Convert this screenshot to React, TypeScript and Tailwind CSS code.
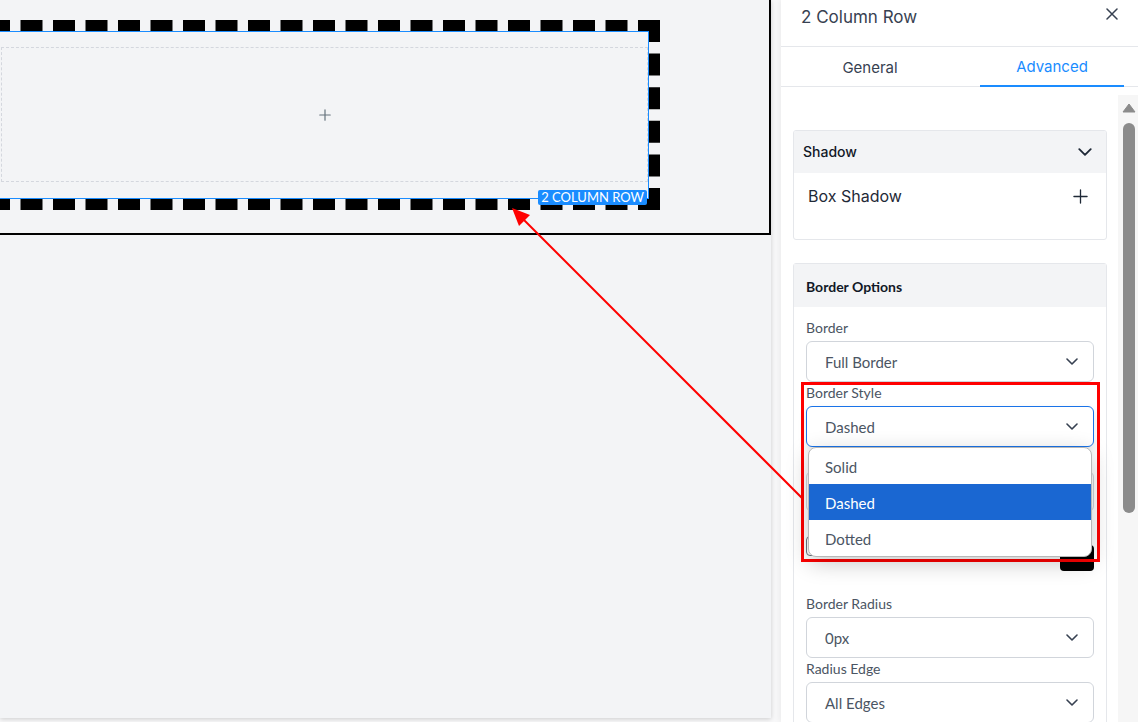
import React from 'react';

const ChevronDown = ({ className = '' }: { className?: string }) => (
  <svg viewBox="0 0 12 7" className={className} fill="none" stroke="currentColor" strokeWidth={1.6} strokeLinecap="round" strokeLinejoin="round">
    <path d="M1 1l5 5 5-5" />
  </svg>
);

const PlusIcon = ({ className = '', width = 1.5 }: { className?: string; width?: number }) => (
  <svg viewBox="0 0 16 16" className={className} fill="none" stroke="currentColor" strokeWidth={width} strokeLinecap="round">
    <path d="M8 1v14M1 8h14" />
  </svg>
);

const SelectBox = ({ value, focused = false }: { value?: string; focused?: boolean }) => (
  <div
    className={`h-[41px] flex items-center justify-between rounded-[6px] bg-white pl-[18px] pr-[15px] text-[15px] text-[#4b5563] ${
      focused ? 'border-[1.5px] border-[#1a73e8] shadow-[0_4px_8px_rgba(0,0,0,0.10)]' : 'border border-[#d1d5db]'
    }`}
  >
    <span className="pt-[2px]">{value}</span>
    <ChevronDown className="w-[12px] h-[7px] text-[#374151]" />
  </div>
);

// label is optional: fields covered by the open menu keep their space but show no text
const Field = ({ label, children, className = '' }: { label?: string; children: React.ReactNode; className?: string }) => (
  <div className={`relative ${className}`}>
    <div className="h-[18px] text-[14px] leading-[18px] text-[#4b5563] mb-[4px]">{label}</div>
    {children}
  </div>
);

const options = ['Solid', 'Dashed', 'Dotted'];

export default function App() {
  return (
    <div className="relative w-[1138px] h-[722px] overflow-hidden bg-[#f8f8f9] flex font-['Lato',sans-serif]">
      {/* canvas */}
      <div className="w-[771px] h-[718px] shrink-0 bg-[#f3f4f6] overflow-hidden shadow-[0_1px_5px_rgba(0,0,0,0.18)]">
        <div className="h-[235px] border-r-2 border-b-2 border-black pt-[20px]">
          <div className="ml-[-12px] w-[672px] h-[190px] border-[11px] border-dashed border-black">
            <div className="relative h-full border border-[#1a8cff] pl-[1px] pt-[15px] pb-[16px]">
              <div className="h-full border border-dashed border-[#d4d7de] flex items-center justify-center">
                <PlusIcon className="w-[12px] h-[12px] text-[#66737d]" width={1.6} />
              </div>
              <div className="absolute right-[1px] bottom-[-7px] bg-[#1a8cff] text-white text-[13px] leading-[15px] px-[3px] rounded-[2px] whitespace-nowrap">
                2 COLUMN ROW
              </div>
            </div>
          </div>
        </div>
      </div>

      {/* settings panel */}
      <aside className="ml-[10px] w-[357px] h-[722px] bg-white flex flex-col shadow-[-2px_0_6px_rgba(0,0,0,0.05)] font-['Inter',sans-serif]">
        <div className="h-[47px] shrink-0 border-b border-[#e5e7eb] flex items-start justify-between pl-[20px] pr-[20px] pt-[5px]">
          <span className="text-[17px] leading-[24px] text-[#374151]">2 Column Row</span>
          <svg viewBox="0 0 12 12" className="w-[12px] h-[12px] mt-[3px] text-[#374151]" fill="none" stroke="currentColor" strokeWidth={1.5} strokeLinecap="round">
            <path d="M1 1l10 10M11 1L1 11" />
          </svg>
        </div>

        <div className="h-[40px] shrink-0 border-b border-[#e5e7eb] flex text-[15px]">
          <div className="w-[178px] flex items-center justify-center pt-[3px] text-[#374151]">General</div>
          <div className="ml-[21px] w-[144px] flex items-center justify-center pt-[3px] text-[#1a8cff] border-b-2 border-[#1a8cff] mb-[-1px]">
            Advanced
          </div>
        </div>

        <div className="flex-1 flex min-h-0">
          <div className="w-[337px] pt-[43px] pl-[12px]">
            {/* Shadow */}
            <div className="w-[314px] border border-[#e5e7eb] rounded-[3px] overflow-hidden">
              <div className="h-[42px] bg-[#f3f4f6] flex items-center justify-between pl-[9px] pr-[14px] pb-[1px]">
                <span className="text-[14px] font-medium text-[#111827]">Shadow</span>
                <ChevronDown className="w-[14px] h-[8px] text-[#1f2937]" />
              </div>
              <div className="h-[66px] flex items-start justify-between pl-[14px] pr-[18px] pt-[12px]">
                <span className="text-[16px] leading-[22px] text-[#1f2937]">Box Shadow</span>
                <PlusIcon className="w-[15px] h-[15px] mt-[4px] text-[#1f2937]" width={1.4} />
              </div>
            </div>

            {/* Border Options */}
            <div className="mt-[23px] w-[314px] h-[480px] border border-[#e5e7eb] rounded-[3px] font-['Lato',sans-serif]">
              <div className="h-[43px] bg-[#f3f4f6] flex items-center pl-[12px] pt-[2px]">
                <span className="text-[14px] font-bold text-[#111827]">Border Options</span>
              </div>
              <div className="pt-[12px] pl-[12px] pr-[12px] flex flex-col gap-[2px]">
                <Field label="Border">
                  <SelectBox value="Full Border" />
                </Field>
                <Field label="Border Style" className="z-10">
                  <SelectBox value="Dashed" focused />
                  <div className="absolute left-[2px] top-[63px] w-[284px] bg-white rounded-[8px] border border-[#b8b8b8] overflow-hidden shadow-[0_6px_22px_rgba(0,0,0,0.22)]">
                    {options.map((o) => (
                      <div
                        key={o}
                        className={`h-[36px] flex items-center pl-[16px] pt-[3px] text-[15px] ${
                          o === 'Dashed' ? 'bg-[#1a67d2] text-white' : 'text-[#4b5563]'
                        }`}
                      >
                        {o}
                      </div>
                    ))}
                  </div>
                </Field>
                <Field>
                  <SelectBox />
                </Field>
                <Field className="mb-[16px]">
                  <div className="h-[41px] flex gap-[8px]">
                    <div className="flex-1 h-[20px] border border-[#6b7280] rounded-[4px]" />
                    <div className="w-[34px] h-[26px] mt-[9px] bg-black rounded-[4px]" />
                  </div>
                </Field>
                <Field label="Border Radius">
                  <SelectBox value="0px" />
                </Field>
                <Field label="Radius Edge">
                  <SelectBox value="All Edges" />
                </Field>
              </div>
            </div>
          </div>

          {/* scrollbar */}
          <div className="w-[20px] pt-[8px] flex flex-col">
            <div className="flex-1 bg-[#f6f6f6] flex flex-col items-center pt-[8px] pl-[2px]">
              <svg viewBox="0 0 14 10" className="w-[14px] h-[10px]">
                <path d="M7 1L13 9H1Z" fill="#8b8b8b" stroke="#8b8b8b" strokeLinejoin="round" />
              </svg>
              <div className="mt-[10px] w-[12px] h-[390px] rounded-full bg-[#8b8b8b]" />
            </div>
          </div>
        </div>
      </aside>

      {/* annotation */}
      <div className="absolute left-[801px] top-[382px] w-[299px] h-[180px] border-[3px] border-[#ff0000] pointer-events-none" />
      <svg className="absolute inset-0 w-[1138px] h-[722px] pointer-events-none" viewBox="0 0 1138 722">
        <line x1="803" y1="499" x2="523" y2="219" stroke="#ff0000" strokeWidth={2} />
        <polygon points="512,208 530,215 519,226" fill="#ff0000" />
      </svg>
    </div>
  );
}
